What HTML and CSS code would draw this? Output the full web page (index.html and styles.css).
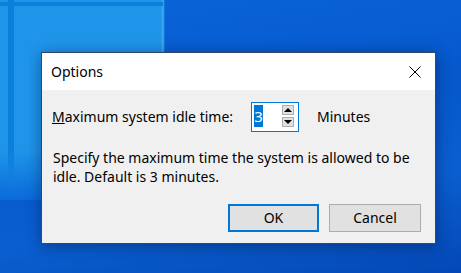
FILE: index.html
```html
<!DOCTYPE html>
<html lang="en">

<head>
    <meta charset="UTF-8">
    <meta name="viewport" content="width=device-width, initial-scale=1.0">
    <title>Options</title>
    <link rel="stylesheet" href="styles.css">
</head>

<body>
    <div class="desktop">
        <div class="dialog">
            <div class="titlebar">
                <span class="title">Options</span>
                <svg class="close" width="12" height="12" viewBox="0 0 12 12">
                    <path d="M0.5 0.5 L11.5 11.5 M11.5 0.5 L0.5 11.5" stroke="#000" stroke-width="1" fill="none" />
                </svg>
            </div>

            <div class="content">
                <div class="row">
                    <label class="label"><u>M</u>aximum system idle time:</label>
                    <div class="spin">
                        <span class="value">3</span>
                        <div class="arrows">
                            <div class="arrow"><span class="tri up"></span></div>
                            <div class="arrow"><span class="tri down"></span></div>
                        </div>
                    </div>
                    <span class="unit">Minutes</span>
                </div>

                <p class="desc">Specify the maximum time the system is allowed to be idle. Default is 3 minutes.</p>

                <div class="buttons">
                    <div class="btn default">OK</div>
                    <div class="btn">Cancel</div>
                </div>
            </div>
        </div>
    </div>
</body>

</html>
```

FILE: styles.css
```css
* {
    margin: 0;
    padding: 0;
    box-sizing: border-box;
}

body {
    font-family: "Noto Sans", "Open Sans", sans-serif;
    font-size: 14px;
    color: #000;
}

.desktop {
    width: 461px;
    height: 273px;
    overflow: hidden;
    padding: 52px 0 0 41px;
    background:
        linear-gradient(#0b7fdc, #0b7fdc) 0 2px / 163px 4px no-repeat,
        linear-gradient(180deg, #0b7fdc 150px, transparent 200px) 8px 0 / 6px 200px no-repeat,
        linear-gradient(180deg, transparent 150px, #0a6ad9 200px) 0 0 / 165px 200px no-repeat,
        linear-gradient(90deg, #1f95ea 161px, #3fb0f0 163px, transparent 165px) 0 0 / 165px 200px no-repeat,
        linear-gradient(170deg, #0a66da 0%, #0658cc 45%, #0a5fd0 70%, #0448b6 100%);
}

.dialog {
    width: 395px;
    height: 192px;
    border: 1px solid #34466a;
    box-shadow: 0 2px 14px rgba(0, 20, 60, 0.45);
    display: flex;
    flex-direction: column;
}

.titlebar {
    height: 37px;
    background-color: #fff;
    display: flex;
    align-items: center;
    justify-content: space-between;
    padding: 0 14px 0 9px;
}

.title {
    line-height: 20px;
}

.content {
    flex: 1;
    background-color: #f0f0f0;
    padding: 12px 14px 11px 10px;
    display: flex;
    flex-direction: column;
}

.row {
    display: flex;
    align-items: center;
    height: 30px;
}

.label {
    width: 199px;
    line-height: 20px;
}

.spin {
    width: 48px;
    height: 30px;
    border: 1px solid #0078d7;
    background-color: #fff;
    display: flex;
    justify-content: space-between;
    padding: 2px 4px 0 2px;
}

.value {
    width: 9px;
    height: 22px;
    background-color: #0078d7;
    color: #fff;
    font-size: 15px;
    line-height: 22px;
    text-align: center;
}

.arrows {
    display: flex;
    flex-direction: column;
    gap: 2px;
}

.arrow {
    width: 12px;
    height: 10px;
    background-color: #e1e1e1;
    border: 1px solid #adadad;
    display: flex;
    align-items: center;
    justify-content: center;
}

.tri {
    width: 0;
    height: 0;
    border-left: 4px solid transparent;
    border-right: 4px solid transparent;
}

.up {
    border-bottom: 4px solid #000;
}

.down {
    border-top: 4px solid #000;
}

.unit {
    margin-left: 18px;
    line-height: 20px;
}

.desc {
    margin-top: 16px;
    line-height: 19px;
    padding-left: 1px;
}

.buttons {
    margin-top: auto;
    display: flex;
    justify-content: flex-end;
    gap: 10px;
}

.btn {
    width: 92px;
    height: 28px;
    background-color: #e1e1e1;
    border: 1px solid #adadad;
    text-align: center;
    line-height: 26px;
}

.default {
    width: 91px;
    border: 2px solid #0078d7;
    line-height: 24px;
}
```
